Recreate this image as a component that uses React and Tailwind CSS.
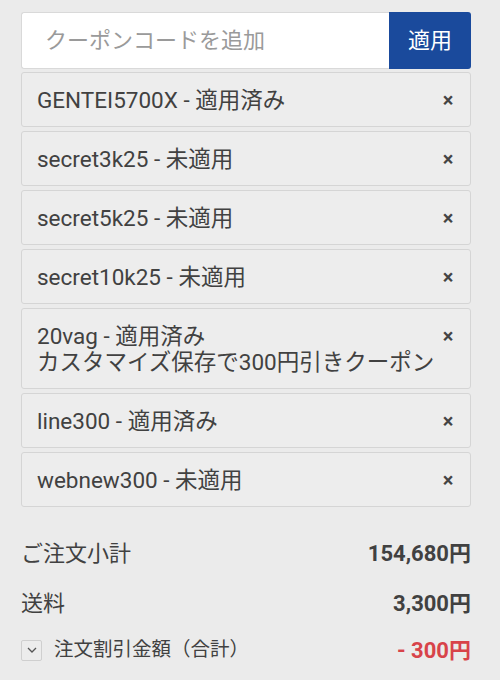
import { useState } from "react";

const coupons = [
  { code: "GENTEI5700X", status: "適用済み" },
  { code: "secret3k25", status: "未適用" },
  { code: "secret5k25", status: "未適用" },
  { code: "secret10k25", status: "未適用" },
  { code: "20vag", status: "適用済み", note: "カスタマイズ保存で300円引きクーポン" },
  { code: "line300", status: "適用済み" },
  { code: "webnew300", status: "未適用" },
];

export default function App() {
  const [code, setCode] = useState("");

  return (
    <div
      className="min-h-screen bg-[#ebebeb] pl-[21px] pr-[29px] pt-[12px] pb-4 text-[#414141]"
      style={{ fontFamily: 'Roboto, "Noto Sans CJK JP", sans-serif' }}
    >
      {/* Coupon input */}
      <div className="flex h-[57px]">
        <input
          type="text"
          value={code}
          onChange={(e) => setCode(e.target.value)}
          placeholder="クーポンコードを追加"
          className="flex-1 min-w-0 bg-white border border-[#d9d9d9] border-r-0 rounded-l-[3px] px-[23px] text-[22px] text-[#333] placeholder-[#9a9a9a] outline-none"
        />
        <button className="w-[82px] bg-[#1a4a9c] text-white text-[22px] rounded-r-[3px]">
          適用
        </button>
      </div>

      {/* Coupon list */}
      <div className="flex flex-col gap-[4px] mt-[3px]">
        {coupons.map((c) => (
          <div
            key={c.code}
            className="flex items-start justify-between bg-[#ededed] border border-[#d5d5d5] rounded-[3px] pl-[15px] pr-[13px] pt-[14px] pb-[13px]"
          >
            <div className="text-[22.5px] leading-[26px]">
              <div>
                {c.code} - {c.status}
              </div>
              {c.note && <div>{c.note}</div>}
            </div>
            <button className="text-[20px] leading-[26px] font-bold text-[#444] w-[18px] text-center">
              ×
            </button>
          </div>
        ))}
      </div>

      {/* Summary */}
      <div className="mt-[29px] flex flex-col">
        <div className="flex justify-between items-center h-[34px]">
          <span className="text-[22px]">ご注文小計</span>
          <span className="text-[22px] font-bold">154,680円</span>
        </div>
        <div className="flex justify-between items-center h-[34px] mt-[16px]">
          <span className="text-[22px]">送料</span>
          <span className="text-[22px] font-bold">3,300円</span>
        </div>
        <div className="flex justify-between items-center h-[34px] mt-[13px]">
          <div className="flex items-center gap-[12px]">
            <span className="w-[21px] h-[21px] border border-[#cfcfcf] bg-[#ececec] rounded-[2px] flex items-center justify-center">
              <svg width="10" height="7" viewBox="0 0 10 7" fill="none" stroke="#555" strokeWidth="1.3">
                <path d="M1 1l4 4 4-4" />
              </svg>
            </span>
            <span className="text-[19.5px]">注文割引金額（合計）</span>
          </div>
          <span className="text-[22px] font-bold text-[#d8434a]">- 300円</span>
        </div>
      </div>
    </div>
  );
}
